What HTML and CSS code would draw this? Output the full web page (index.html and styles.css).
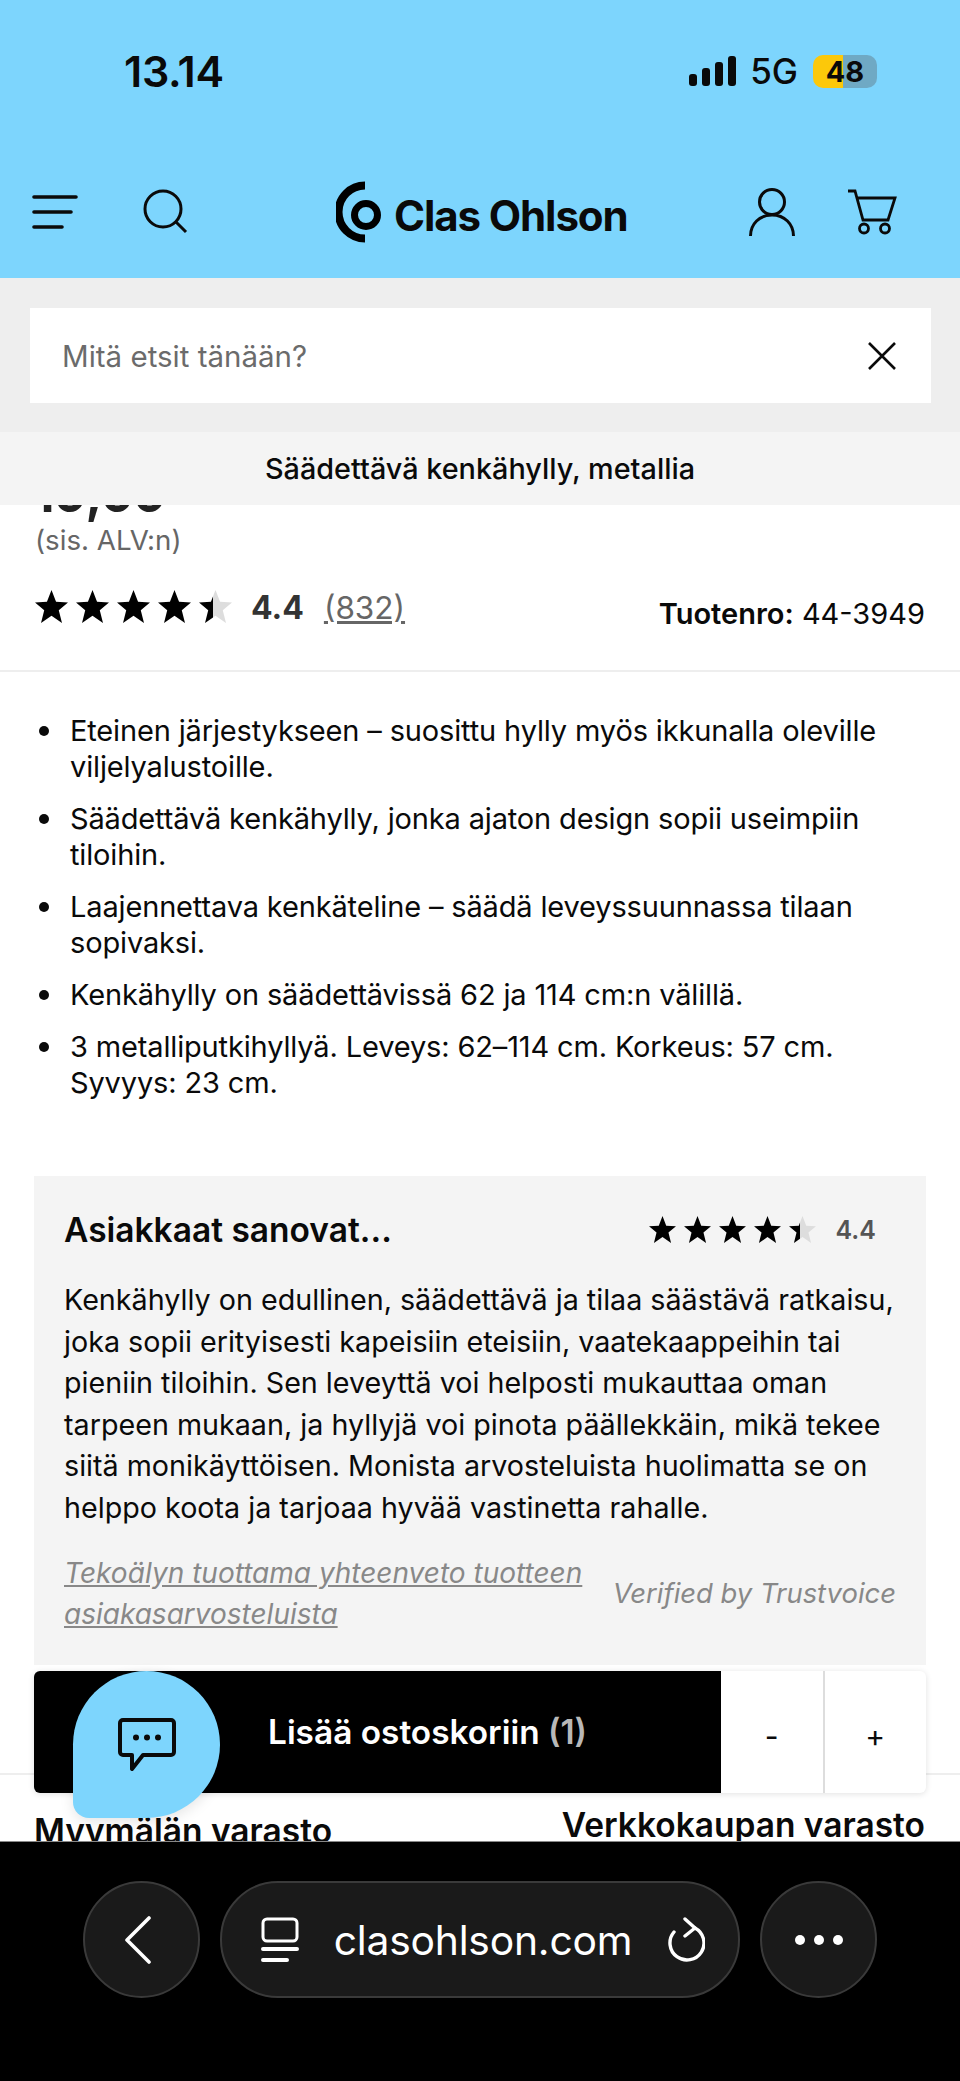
FILE: index.html
```html
<!DOCTYPE html>
<html lang="fi">
<head>
    <meta charset="UTF-8">
    <meta name="viewport" content="width=device-width, initial-scale=1.0">
    <title>Säädettävä kenkähylly, metallia</title>
    <link rel="stylesheet" href="styles.css">
</head>
<body>
    <svg class="defs" width="0" height="0">
        <defs>
            <linearGradient id="partFill">
                <stop offset="42%" stop-color="#000"/>
                <stop offset="42%" stop-color="#ddd"/>
            </linearGradient>
            <symbol id="star" viewBox="0 0 34 34">
                <path d="M17 0l4.700 12.200L34 12.900l-9.500 7.900L27.800 34 17 26.600 6.200 34l3.300-13.200L0 12.900l12.300-.7z"/>
            </symbol>
        </defs>
    </svg>

    <div class="top">
        <div class="status">
            <span class="clock">13.14</span>
            <div class="status-right">
                <svg width="47" height="30" viewBox="0 0 47 30" fill="#0a0a0a">
                    <rect x="0" y="18" width="8" height="12" rx="3"/>
                    <rect x="13" y="12" width="8" height="18" rx="3"/>
                    <rect x="26" y="6" width="8" height="24" rx="3"/>
                    <rect x="39" y="0" width="8" height="30" rx="3"/>
                </svg>
                <span class="network">5G</span>
                <div class="battery"><span>48</span></div>
            </div>
        </div>
        <div class="nav">
            <div class="nav-left">
                <svg width="46" height="36" viewBox="0 0 46 36" fill="none" stroke="#0a0a0a" stroke-width="3.6" stroke-linecap="round">
                    <path d="M2 3h42M2 18h37M2 33h28"/>
                </svg>
                <svg width="48" height="48" viewBox="0 0 48 48" fill="none" stroke="#0a0a0a" stroke-width="3">
                    <circle cx="22" cy="21" r="18"/>
                    <path d="M35 34l10 10"/>
                </svg>
            </div>
            <div class="logo">
                <svg width="48" height="62" viewBox="0 0 48 62" fill="none" stroke="#000">
                    <path d="M29 4.500A26.500 26.500 0 0 0 29 57.500" stroke-width="8"/>
                    <circle cx="30" cy="34" r="11.500" stroke-width="7"/>
                </svg>
                <span>Clas Ohlson</span>
            </div>
            <div class="nav-right">
                <svg width="46" height="50" viewBox="0 0 46 50" fill="none" stroke="#0a0a0a" stroke-width="3">
                    <circle cx="23" cy="15" r="12.500"/>
                    <path d="M1.500 49c0-12 9-21 21.500-21s21.500 9 21.500 21"/>
                </svg>
                <svg width="50" height="46" viewBox="0 0 50 46" fill="none" stroke="#0a0a0a" stroke-width="2.800">
                    <path d="M1 2h7l8 29h25l7-22H10"/>
                    <circle cx="17" cy="39.500" r="4.500"/>
                    <circle cx="38" cy="39.500" r="4.500"/>
                </svg>
            </div>
        </div>
    </div>

    <div class="search-band">
        <div class="search-box">
            <span class="placeholder">Mitä etsit tänään?</span>
            <svg width="30" height="30" viewBox="0 0 30 30" fill="none" stroke="#0a0a0a" stroke-width="2.600">
                <path d="M2 2l26 26M28 2L2 28"/>
            </svg>
        </div>
    </div>

    <div class="title-bar">Säädettävä kenkähylly, metallia</div>

    <main class="content">
        <div class="price">19,99</div>
        <div class="vat">(sis. ALV:n)</div>
        <div class="rating-row">
            <div class="stars">
                <svg><use href="#star"/></svg>
                <svg><use href="#star"/></svg>
                <svg><use href="#star"/></svg>
                <svg><use href="#star"/></svg>
                <svg><use href="#star" fill="url(#partFill)"/></svg>
            </div>
            <span class="score">4.4</span>
            <a class="count">(832)</a>
            <span class="sku"><b>Tuotenro:</b> 44-3949</span>
        </div>

        <ul class="features">
            <li>Eteinen järjestykseen – suosittu hylly myös ikkunalla oleville viljelyalustoille.</li>
            <li>Säädettävä kenkähylly, jonka ajaton design sopii useimpiin tiloihin.</li>
            <li>Laajennettava kenkäteline – säädä leveyssuunnassa tilaan sopivaksi.</li>
            <li>Kenkähylly on säädettävissä 62 ja 114 cm:n välillä.</li>
            <li>3 metalliputkihyllyä. Leveys: 62–114 cm. Korkeus: 57 cm. Syvyys: 23 cm.</li>
        </ul>

        <section class="summary">
            <div class="summary-head">
                <h2>Asiakkaat sanovat...</h2>
                <div class="stars stars-small">
                    <svg><use href="#star"/></svg>
                    <svg><use href="#star"/></svg>
                    <svg><use href="#star"/></svg>
                    <svg><use href="#star"/></svg>
                    <svg><use href="#star" fill="url(#partFill)"/></svg>
                </div>
                <span class="summary-score">4.4</span>
            </div>
            <p>Kenkähylly on edullinen, säädettävä ja tilaa säästävä ratkaisu, joka sopii erityisesti kapeisiin eteisiin, vaatekaappeihin tai pieniin tiloihin. Sen leveyttä voi helposti mukauttaa oman tarpeen mukaan, ja hyllyjä voi pinota päällekkäin, mikä tekee siitä monikäyttöisen. Monista arvosteluista huolimatta se on helppo koota ja tarjoaa hyvää vastinetta rahalle.</p>
            <div class="summary-foot">
                <a>Tekoälyn tuottama yhteenveto tuotteen asiakasarvosteluista</a>
                <span>Verified by Trustvoice</span>
            </div>
        </section>

        <div class="buy-bar">
            <div class="buy-button">Lisää ostoskoriin <em>(1)</em></div>
            <div class="qty">-</div>
            <div class="qty">+</div>
        </div>

        <div class="stock">
            <h3 class="stock-store">Myymälän varasto</h3>
            <h3 class="stock-web">Verkkokaupan varasto</h3>
        </div>

        <div class="chat">
            <svg width="58" height="54" viewBox="0 0 58 54" fill="none">
                <path d="M5 2h48a3 3 0 0 1 3 3v29a3 3 0 0 1-3 3H25L14 51V37H5a3 3 0 0 1-3-3V5a3 3 0 0 1 3-3z" stroke="#0a0a0a" stroke-width="4" stroke-linejoin="round"/>
                <circle cx="18" cy="19.500" r="3" fill="#0a0a0a"/>
                <circle cx="29" cy="19.500" r="3" fill="#0a0a0a"/>
                <circle cx="40" cy="19.500" r="3" fill="#0a0a0a"/>
            </svg>
        </div>
    </main>

    <div class="browser">
        <div class="round-btn">
            <svg class="back-icon" width="30" height="48" viewBox="0 0 30 48" fill="none" stroke="#fff" stroke-width="3.600" stroke-linecap="round" stroke-linejoin="round">
                <path d="M26 2L4 24l22 22"/>
            </svg>
        </div>
        <div class="url-pill">
            <svg width="38" height="46" viewBox="0 0 38 46" fill="none" stroke="#fff">
                <rect x="2" y="2" width="34" height="22" rx="4" stroke-width="3"/>
                <path d="M2 32h34M2 43h24" stroke-width="4" stroke-linecap="round"/>
            </svg>
            <span>clasohlson.com</span>
            <svg width="38" height="46" viewBox="0 0 38 46" fill="none" stroke="#fff" stroke-width="3.400" stroke-linecap="round" stroke-linejoin="round">
                <path d="M7 15A17 17 0 1 0 28 11"/>
                <path d="M18 2l10 9-10 8"/>
            </svg>
        </div>
        <div class="round-btn">
            <svg width="50" height="12" viewBox="0 0 50 12" fill="#fff">
                <circle cx="6" cy="6" r="5"/>
                <circle cx="25" cy="6" r="5"/>
                <circle cx="44" cy="6" r="5"/>
            </svg>
        </div>
    </div>
</body>
</html>
```

FILE: styles.css
```css
* {
    margin: 0;
    padding: 0;
    box-sizing: border-box;
}
html, body { height: 100%; }
body {
    background: #fff;
    color: #0a0a0a;
    font-family: Inter, 'Noto Sans', sans-serif;
    width: 960px;
    height: 2081px;
    overflow: hidden;
}
.defs { display: block; height: 0; }
svg { display: block; flex: none; }

/* blue header */
.top { background: #7dd5fd; height: 278px; }
.status {
    display: flex;
    align-items: center;
    justify-content: space-between;
    height: 50px;
    padding: 46px 83px 0 124px;
    box-sizing: content-box;
}
.clock { font-size: 43px; font-weight: 600; letter-spacing: -0.3px; }
.status-right { display: flex; align-items: center; }
.network { font-size: 35px; font-weight: 500; margin-left: 14px; }
.battery {
    width: 64px;
    height: 33px;
    margin-left: 15px;
    border-radius: 10px;
    background: linear-gradient(90deg, #fcc80a 47%, #6fa9c4 47%);
    font-size: 29px;
    font-weight: 700;
    text-align: center;
    line-height: 33px;
}
.nav {
    display: flex;
    align-items: center;
    height: 100px;
    margin-top: 66px;
    padding-left: 32px;
}
.nav-left { display: flex; align-items: center; gap: 63px; width: 304px; }
.logo { display: flex; align-items: center; gap: 10px; width: 413px; }
.logo span { font-size: 42px; font-weight: 700; letter-spacing: -1.100px; padding-top: 6px; white-space: nowrap; }
.nav-right { display: flex; align-items: center; gap: 52px; }

/* search */
.search-band { background: #eeeeee; height: 154px; padding: 30px 29px 29px 30px; }
.search-box {
    background: #fff;
    height: 95px;
    display: flex;
    align-items: center;
    justify-content: space-between;
    padding: 0 34px 0 32px;
}
.placeholder { font-size: 29.500px; color: #6b6b6b; }
.title-bar {
    background: #f4f4f4;
    height: 73px;
    line-height: 73px;
    text-align: center;
    font-size: 28.800px;
    font-weight: 500;
}

/* page content, clipped by the bars above and below */
.content { height: 1336px; overflow: hidden; position: relative; }
.price {
    font-size: 50px;
    font-weight: 700;
    line-height: 50px;
    margin: -36px 0 0 33px;
    color: #222;
}
.vat { font-size: 27.700px; line-height: 36px; color: #666; margin: 3px 0 0 35px; }
.rating-row {
    display: flex;
    align-items: center;
    height: 44px;
    margin-top: 27px;
    padding: 0 35px;
}
.stars { display: flex; gap: 8px; margin-top: -2px; }
.stars svg { width: 33px; height: 33px; }
.score { font-size: 32px; font-weight: 700; color: #333; margin-left: 19px; }
.count { font-size: 31.500px; color: #666; margin-left: 20px; text-decoration: underline; }
.sku { font-size: 29px; margin-left: auto; padding-top: 13px; }
.sku b { font-weight: 600; }

.features {
    list-style: none;
    border-top: 2px solid #eeeeee;
    margin-top: 41px;
    padding: 41px 34px 0 39px;
    font-size: 29px;
    letter-spacing: -0.150px;
    line-height: 36px;
}
.features li { display: flex; margin-bottom: 16px; }
.features li::before {
    content: '';
    flex: none;
    width: 10px;
    height: 10px;
    margin: 13px 21px 0 0;
    border-radius: 50%;
    background: #0a0a0a;
}
.features li:last-child { margin-bottom: 0; }

.summary {
    background: #f4f4f4;
    margin: 75px 34px 0;
    height: 489px;
    padding: 30px 30px 0;
}
.summary-head { display: flex; align-items: center; height: 48px; }
.summary-head h2 { font-size: 33.500px; font-weight: 600; margin-right: auto; }
.stars-small { gap: 8px; }
.stars-small svg { width: 27px; height: 27px; }
.summary-score { font-size: 25px; font-weight: 600; color: #555; margin: 0 20px 0 20px; }
.summary p { font-size: 28.700px; line-height: 41.600px; margin-top: 25px; }
.summary-foot {
    display: flex;
    align-items: center;
    justify-content: space-between;
    margin-top: 24px;
    font-size: 28px;
    line-height: 41.600px;
    font-style: italic;
    color: #888;
}
.summary-foot a { width: 520px; text-decoration: underline; }
.summary-foot span { font-size: 27.400px; }

.buy-bar {
    display: flex;
    height: 122px;
    margin: 6px 34px 0;
    position: relative;
    z-index: 1;
    background: #fff;
    border-radius: 6px;
    box-shadow: 0 1px 6px rgba(0,0,0,0.12);
}
.buy-button {
    width: 687px;
    background: #000;
    color: #fff;
    border-radius: 6px 0 0 6px;
    padding: 0 0 0 234px;
    line-height: 122px;
    font-size: 33.400px;
    font-weight: 600;
}
.buy-button em { font-style: normal; color: #b8b8b8; }
.qty {
    flex: 1;
    text-align: center;
    font-size: 30px;
    line-height: 130px;
}
.qty + .qty { border-left: 2px solid #dddddd; }

.stock {
    display: flex;
    justify-content: space-between;
    margin-top: -20px;
    padding: 26px 35px 0 34px;
    border-top: 2px solid #eeeeee;
}
.stock h3 { font-size: 33.500px; font-weight: 600; line-height: 40px; }
.stock-store { padding-top: 10px; }
.stock-web { padding-top: 4px; }

/* floating chat button */
.chat {
    position: absolute;
    left: 73px;
    top: 1166px;
    width: 147px;
    height: 147px;
    z-index: 2;
    background: #7dd5fd;
    border-radius: 50% 50% 50% 16px;
    box-shadow: 0 4px 14px rgba(0,0,0,0.1);
    display: flex;
    align-items: center;
    justify-content: center;
}

/* browser toolbar */
.browser {
    background: #000;
    height: 240px;
    border-top: 1px solid #888;
    display: flex;
    gap: 20px;
    padding: 39px 0 0 83px;
}
.round-btn, .url-pill {
    height: 117px;
    background: #1a1a1a;
    border: 2px solid #3a3a3a;
    display: flex;
    align-items: center;
}
.round-btn { width: 117px; border-radius: 50%; justify-content: center; }
.back-icon { margin-right: 8px; }
.url-pill {
    width: 520px;
    border-radius: 58px;
    padding: 0 33px 0 39px;
    justify-content: space-between;
    color: #fff;
    font-size: 40.800px;
    letter-spacing: -0.200px;
}
```
